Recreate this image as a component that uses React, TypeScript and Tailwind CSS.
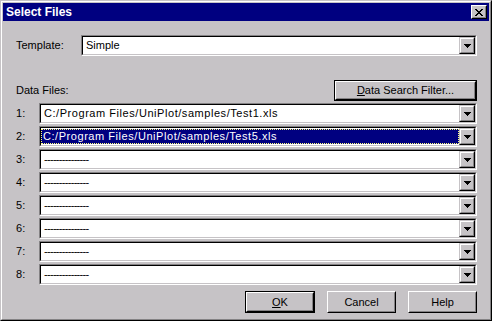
import React from "react";

const Arrow = () => (
  <svg width="7" height="4" viewBox="0 0 7 4" shapeRendering="crispEdges">
    <path d="M0 0h7v1H0zM1 1h5v1H1zM2 2h3v1H2zM3 3h1v1H3z" fill="#000" />
  </svg>
);

const CloseX = () => (
  <svg width="8" height="7" viewBox="0 0 8 7" shapeRendering="crispEdges">
    <path
      d="M0 0h2v1H0zM6 0h2v1H6zM1 1h2v1H1zM5 1h2v1H5zM2 2h4v1H2zM3 3h2v1H3zM2 4h4v1H2zM1 5h2v1H1zM5 5h2v1H5zM0 6h2v1H0zM6 6h2v1H6z"
      fill="#000"
    />
  </svg>
);

function DropBtn() {
  return (
    <div className="w-[16px] h-full border border-t-[#c6c3c6] border-l-[#c6c3c6] border-b-black border-r-black">
      <div className="w-full h-full bg-[#c6c3c6] border border-t-white border-l-white border-b-[#848284] border-r-[#848284] flex items-center justify-center">
        <Arrow />
      </div>
    </div>
  );
}

function Combo({
  text,
  selected,
  dashes,
  path,
  className = "",
}: {
  text: string;
  selected?: boolean;
  dashes?: boolean;
  path?: boolean;
  className?: string;
}) {
  const track = dashes ? "tracking-[-0.7px]" : path ? "tracking-[0.55px]" : "";
  return (
    <div
      className={`flex h-[21px] border border-t-[#848284] border-l-[#848284] border-b-white border-r-white ${className}`}
    >
      <div className="flex flex-1 min-w-0 border border-t-black border-l-black border-b-[#c6c3c6] border-r-[#c6c3c6] bg-white">
        <div className="flex-1 min-w-0 flex items-stretch py-px">
          {selected ? (
            <div
              className={`flex-1 flex items-center bg-[#000080] text-white border border-dotted border-[#ffff7f] pl-px whitespace-nowrap overflow-hidden ${track}`}
            >
              {text}
            </div>
          ) : (
            <div
              className={`flex-1 flex items-center pl-[3px] whitespace-nowrap overflow-hidden ${track}`}
            >
              {text}
            </div>
          )}
        </div>
        <DropBtn />
      </div>
    </div>
  );
}

function Button({
  children,
  def,
  className = "",
}: {
  children: React.ReactNode;
  def?: boolean;
  className?: string;
}) {
  const inner = (
    <div className="w-full h-full border border-t-white border-l-white border-b-black border-r-black">
      <div className="w-full h-full border border-t-[#c6c3c6] border-l-[#c6c3c6] border-b-[#848284] border-r-[#848284] bg-[#c6c3c6] flex items-center justify-center whitespace-nowrap">
        {children}
      </div>
    </div>
  );
  if (def) {
    return <div className={`border border-black ${className}`}>{inner}</div>;
  }
  return <div className={className}>{inner}</div>;
}

export default function App() {
  const rows = [
    { t: "C:/Program Files/UniPlot/samples/Test1.xls", p: true },
    { t: "C:/Program Files/UniPlot/samples/Test5.xls", p: true, sel: true },
    { t: "---------------", d: true },
    { t: "---------------", d: true },
    { t: "---------------", d: true },
    { t: "---------------", d: true },
    { t: "---------------", d: true },
    { t: "---------------", d: true },
  ];
  return (
    <div className="w-[492px] h-[321px] bg-[#c6c3c6] border border-t-[#c6c3c6] border-l-[#c6c3c6] border-b-black border-r-black font-['Liberation_Sans',Arial,sans-serif] text-[11px] leading-none text-black">
      <div className="h-full border border-t-white border-l-white border-b-[#848284] border-r-[#848284] p-px flex flex-col">
        <div className="h-[18px] bg-[#000080] flex items-center justify-between pl-[3px] pr-[2px]">
          <span className="text-white font-bold text-[12px]">Select Files</span>
          <div className="w-[16px] h-[14px] border border-t-white border-l-white border-b-black border-r-black">
            <div className="w-full h-full bg-[#c6c3c6] border border-t-[#c6c3c6] border-l-[#c6c3c6] border-b-[#848284] border-r-[#848284] flex items-center justify-center">
              <CloseX />
            </div>
          </div>
        </div>
        <div className="flex flex-col pl-[13px] pr-[12px]">
          <div className="mt-[14px] flex items-center">
            <span className="w-[65px]">Template:</span>
            <Combo className="flex-1" text="Simple" />
          </div>
          <div className="mt-[24px] flex items-center justify-between">
            <span>Data Files:</span>
            <Button def className="w-[143px] h-[21px]">
              <span>
                <span className="underline underline-offset-[1px]">D</span>ata Search Filter...
              </span>
            </Button>
          </div>
          <div className="mt-[2px] flex flex-col gap-[2px]">
            {rows.map((r, i) => (
              <div key={i} className="flex items-center">
                <span className="w-[23px]">{i + 1}:</span>
                <Combo className="flex-1" text={r.t} selected={r.sel} dashes={r.d} path={r.p} />
              </div>
            ))}
          </div>
          <div className="mt-[6px] flex justify-end gap-[12px]">
            <Button def className="w-[70px] h-[22px]">
              <span>
                <span className="underline underline-offset-[1px]">O</span>K
              </span>
            </Button>
            <Button className="w-[69px] h-[22px]">Cancel</Button>
            <Button className="w-[69px] h-[22px]">Help</Button>
          </div>
        </div>
      </div>
    </div>
  );
}
